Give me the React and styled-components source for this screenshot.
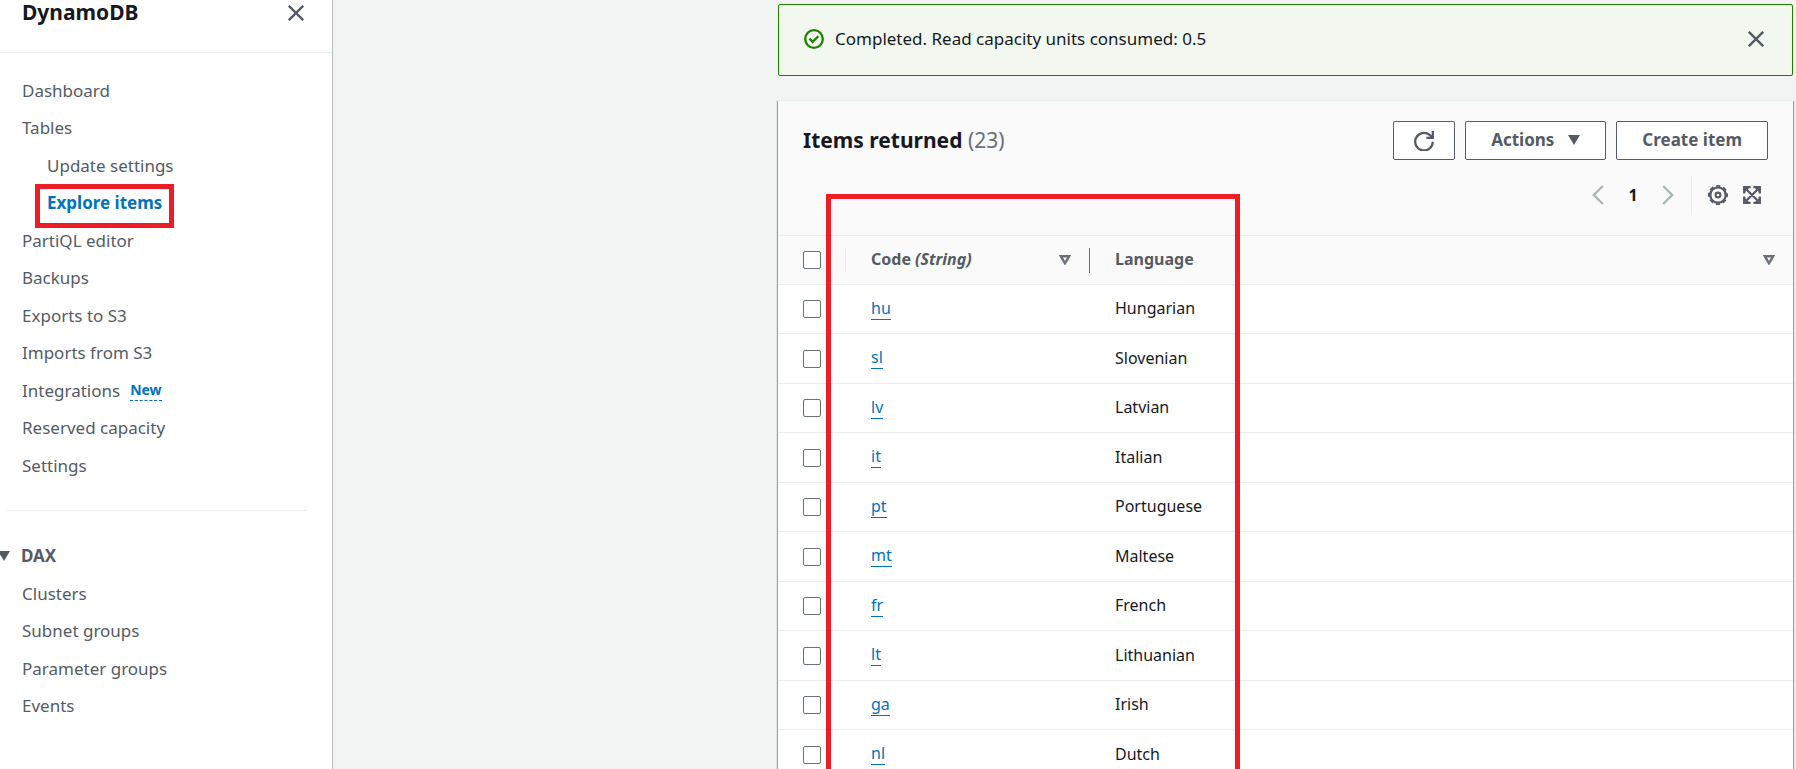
import React from "react";
import styled, { createGlobalStyle, css } from "styled-components";

const GlobalStyle = createGlobalStyle`
  *, *::before, *::after { box-sizing: border-box; }
  body {
    margin: 0;
    background: #f2f3f3;
    color: #16191f;
    font: 17px/22px "Noto Sans", "Open Sans", sans-serif;
  }
  button { font: inherit; color: inherit; }
`;

const Shell = styled.div`
  display: flex;
  height: 100vh;
  overflow: hidden;
`;

const Sidebar = styled.aside`
  flex: 0 0 333px;
  background: #fff;
  border-right: 1px solid #b6bfc0;
  color: #545b64;
  overflow: hidden;
`;

const SidebarHeader = styled.header`
  display: flex;
  justify-content: space-between;
  align-items: flex-start;
  height: 53px;
  padding: 0 28px 0 22px;
  border-bottom: 1px solid #eaeded;
`;

const Brand = styled.a`
  color: #16191f;
  font-size: 21px;
  font-weight: 700;
  line-height: 24px;
  text-decoration: none;
`;

const IconButton = styled.button`
  display: inline-flex;
  align-items: center;
  justify-content: center;
  width: ${(p) => p.$width || 16}px;
  height: 26px;
  padding: 0;
  border: 0;
  background: none;
  color: ${(p) => (p.$muted ? "#aab7b8" : "#545b64")};
  cursor: pointer;
`;

const NavList = styled.ul`
  list-style: none;
  margin: 0;
  padding: ${(p) => (p.$first ? "19px" : "0")} 0 0 22px;
`;

const NavItem = styled.li`
  display: flex;
  align-items: center;
  gap: 10px;
  height: 37px;
  padding-left: ${(p) => (p.$nested ? 25 : 0)}px;
  &:nth-child(even) { height: 38px; }
`;

const NavLink = styled.a`
  position: relative;
  color: ${(p) => (p.$active ? "#0073bb" : "#545b64")};
  font-weight: ${(p) => (p.$active ? 700 : 400)};
  text-decoration: none;
`;

const highlight = css`
  position: absolute;
  border: 5px solid #ee1c25;
  pointer-events: none;
`;

const LinkHighlight = styled.span`
  ${highlight}
  inset: -8px -12px -14px -12px;
`;

const NewBadge = styled.button`
  padding: 0;
  border: 0;
  border-bottom: 1px dashed #0073bb;
  background: none;
  color: #0073bb;
  font-size: 14px;
  font-weight: 700;
  line-height: 20px;
  cursor: pointer;
`;

const Divider = styled.hr`
  height: 1px;
  margin: 26px 25px 25px 7px;
  border: 0;
  background: #eaeded;
`;

const SectionToggle = styled.button`
  display: flex;
  align-items: center;
  gap: 11px;
  height: 39px;
  padding: 0;
  border: 0;
  background: none;
  font-weight: 700;
  cursor: pointer;
`;

const Main = styled.main`
  flex: 1;
  min-width: 0;
  padding: 4px 3px 0 445px;
`;

const Alert = styled.section`
  display: flex;
  align-items: center;
  gap: 11px;
  height: 72px;
  padding: 0 28px 2px 25px;
  border: 1px solid #1d8102;
  border-radius: 2px;
  background: #f2f8f0;
`;

const AlertText = styled.p`
  flex: 1;
  margin: 0;
`;

const Card = styled.section`
  position: relative;
  margin-top: 24px;
  border-top: 1px solid #eaeded;
  background: #fff;
  box-shadow: 0 1px 1px 0 rgba(0, 28, 36, 0.3), 1px 1px 1px 0 rgba(0, 28, 36, 0.35),
    -1px 1px 1px 0 rgba(0, 28, 36, 0.35);
`;

const CardHeader = styled.header`
  display: flex;
  flex-direction: column;
  gap: 15px;
  padding: 20px 25px;
  background: #fafafa;
  border-bottom: 1px solid #eaeded;
`;

const TitleRow = styled.div`
  display: flex;
  justify-content: space-between;
  align-items: center;
`;

const Title = styled.h2`
  margin: 0;
  padding-bottom: 2px;
  font-size: 21px;
  font-weight: 700;
  line-height: 26px;
`;

const Count = styled.span`
  color: #687078;
  font-weight: 400;
`;

const ButtonGroup = styled.div`
  display: flex;
  gap: 10px;
`;

const Button = styled.button`
  display: inline-flex;
  align-items: center;
  justify-content: center;
  gap: 14px;
  height: 39px;
  padding: 0 ${(p) => (p.$icon ? 20 : 25)}px ${(p) => (p.$icon ? 0 : 2)}px;
  border: 1px solid #545b64;
  border-radius: 2px;
  background: #fff;
  color: #545b64;
  font-weight: 700;
  cursor: pointer;
`;

const Tools = styled.div`
  display: flex;
  justify-content: flex-end;
  align-items: center;
  height: 40px;
  padding-right: 7px;
`;

const Pager = styled.nav`
  display: flex;
  align-items: center;
  gap: 24px;
  height: 39px;
  padding-right: 17px;
  margin-right: 16px;
  border-right: 1px solid #eaeded;
`;

const PageButton = styled.button`
  width: 10px;
  padding: 0;
  border: 0;
  background: none;
  color: #16191f;
  font-size: 16px;
  font-weight: 700;
  cursor: pointer;
`;

const Preferences = styled.div`
  display: flex;
  gap: 15px;
`;

const Table = styled.table`
  width: 100%;
  border-collapse: separate;
  border-spacing: 0;
  table-layout: fixed;
  font-size: 16px;
`;

const Row = styled.tr`
  height: 49px;
  &:nth-child(even) { height: 50px; }
`;

const HeadCell = styled.th`
  width: ${(p) => p.$width || "auto"};
  height: 49px;
  padding: 0;
  border-bottom: 1px solid #eaeded;
  background: #fafafa;
  color: #545b64;
  text-align: left;
`;

const HeadContent = styled.div`
  display: flex;
  align-items: center;
  justify-content: space-between;
  height: 25px;
  padding: 0 18px 0 25px;
  border-right: ${(p) => (p.$divider ? `1px solid ${p.$divider}` : "0")};
`;

const HeadLabel = styled.span`
  padding-bottom: 2px;
`;

const Cell = styled.td`
  padding: 0 25px 2px;
  border-bottom: 1px solid #eaeded;
`;

const CheckCell = styled(Cell)`
  padding-bottom: 0;
`;

const Checkbox = styled.input.attrs({ type: "checkbox" })`
  appearance: none;
  display: block;
  width: 18px;
  height: 18px;
  margin: 0;
  border: 1px solid #687078;
  border-radius: 2px;
  background: #fff;
  &:checked { background: #0073bb; }
`;

const ItemLink = styled.a`
  display: inline-block;
  border-bottom: 1px solid #0073bb;
  color: #0073bb;
  line-height: 21px;
  text-decoration: none;
`;

const TableHighlight = styled.div`
  ${highlight}
  top: 93px;
  bottom: -20px;
  left: 48px;
  width: 414px;
`;

const CloseIcon = () => (
  <svg width="16" height="16" viewBox="0 0 16 16" fill="none" stroke="currentColor" strokeWidth="2.4" aria-hidden="true">
    <path d="M.8.8l14.4 14.4M15.2.8L.8 15.2" />
  </svg>
);

const SuccessIcon = () => (
  <svg width="20" height="20" viewBox="0 0 20 20" fill="none" stroke="#1d8102" strokeWidth="2.3" aria-hidden="true">
    <circle cx="10" cy="10" r="8.8" />
    <path d="M5.5 9.6l3.2 3.2 5.6-5.6" />
  </svg>
);

const RefreshIcon = () => (
  <svg width="20" height="20" viewBox="0 0 20 20" fill="none" stroke="currentColor" strokeWidth="2.3" aria-hidden="true">
    <path d="M18.8 10.8A8.8 8.8 0 1 1 15.6 3.9L18 6.2" />
    <path d="M18.8 0v6.9H12.4" />
  </svg>
);

const CaretIcon = () => (
  <svg width="12" height="10" viewBox="0 0 12 10" fill="currentColor" aria-hidden="true">
    <path d="M0 0h12L6 10z" />
  </svg>
);

const SectionCaret = () => (
  <svg width="10" height="10" viewBox="0 0 10 10" fill="#545b64" aria-hidden="true">
    <path d="M-2 0h12L4 10z" />
  </svg>
);

const SortIcon = () => (
  <svg width="12" height="10" viewBox="0 0 12 10" fill="none" stroke="#687078" strokeWidth="2.4" aria-hidden="true">
    <path d="M1.8 1.2h8.4L6 8.3z" />
  </svg>
);

const ChevronIcon = ({ right }) => (
  <svg width="12" height="20" viewBox="0 0 12 20" fill="none" stroke="currentColor" strokeWidth="2.4" aria-hidden="true">
    <path d={right ? "M1.2 1l9 9-9 9" : "M10.8 1l-9 9 9 9"} />
  </svg>
);

const GearIcon = () => (
  <svg width="20" height="20" viewBox="0 0 20 20" fill="none" stroke="currentColor" aria-hidden="true">
    <circle cx="10" cy="10" r="7.7" strokeWidth="2.3" />
    <circle cx="10" cy="10" r="9.1" strokeWidth="1.8" strokeDasharray="4.2 2.947" strokeDashoffset="2.1" />
    <circle cx="10" cy="10" r="2.4" strokeWidth="2.1" />
  </svg>
);

const ExpandIcon = () => (
  <svg width="18" height="18" viewBox="0 0 18 18" fill="none" stroke="currentColor" strokeWidth="2.3" aria-hidden="true">
    <path d="M1.2 7.6V1.2H7.6M10.4 1.2h6.4V7.6M16.8 10.4v6.4H10.4M7.6 16.8H1.2V10.4M1.5 1.5l15 15M16.5 1.5l-15 15" />
    <path
      fill="currentColor"
      stroke="none"
      d="M1 1h6L1 7zM17 1v6L11 1zM17 17h-6L17 11zM1 17V11L7 17z"
    />
  </svg>
);

const mainLinks = [
  { label: "Dashboard" },
  { label: "Tables" },
  { label: "Update settings", nested: true },
  { label: "Explore items", nested: true, active: true },
  { label: "PartiQL editor" },
  { label: "Backups" },
  { label: "Exports to S3" },
  { label: "Imports from S3" },
  { label: "Integrations", isNew: true },
  { label: "Reserved capacity" },
  { label: "Settings" },
];

const daxLinks = [
  { label: "Clusters" },
  { label: "Subnet groups" },
  { label: "Parameter groups" },
  { label: "Events" },
];

const items = [
  ["hu", "Hungarian"],
  ["sl", "Slovenian"],
  ["lv", "Latvian"],
  ["it", "Italian"],
  ["pt", "Portuguese"],
  ["mt", "Maltese"],
  ["fr", "French"],
  ["lt", "Lithuanian"],
  ["ga", "Irish"],
  ["nl", "Dutch"],
];

const Nav = ({ links, first }) => (
  <NavList $first={first}>
    {links.map((link) => (
      <NavItem key={link.label} $nested={link.nested}>
        <NavLink href="#" $active={link.active} aria-current={link.active ? "page" : undefined}>
          {link.label}
          {link.active && <LinkHighlight />}
        </NavLink>
        {link.isNew && <NewBadge type="button">New</NewBadge>}
      </NavItem>
    ))}
  </NavList>
);

export default function App() {
  return (
    <>
      <GlobalStyle />
      <Shell>
        <Sidebar>
          <SidebarHeader>
            <Brand href="#">DynamoDB</Brand>
            <IconButton type="button" aria-label="Close navigation">
              <CloseIcon />
            </IconButton>
          </SidebarHeader>
          <nav aria-label="DynamoDB">
            <Nav links={mainLinks} first />
            <Divider />
            <SectionToggle type="button" aria-expanded="true">
              <SectionCaret />
              DAX
            </SectionToggle>
            <Nav links={daxLinks} />
          </nav>
        </Sidebar>
        <Main>
          <Alert role="status">
            <SuccessIcon />
            <AlertText>Completed. Read capacity units consumed: 0.5</AlertText>
            <IconButton type="button" aria-label="Dismiss">
              <CloseIcon />
            </IconButton>
          </Alert>
          <Card>
            <CardHeader>
              <TitleRow>
                <Title>
                  Items returned <Count>(23)</Count>
                </Title>
                <ButtonGroup>
                  <Button type="button" $icon aria-label="Refresh">
                    <RefreshIcon />
                  </Button>
                  <Button type="button">
                    Actions
                    <CaretIcon />
                  </Button>
                  <Button type="button">Create item</Button>
                </ButtonGroup>
              </TitleRow>
              <Tools>
                <Pager aria-label="Pagination">
                  <IconButton type="button" $width={12} $muted aria-label="Previous page">
                    <ChevronIcon />
                  </IconButton>
                  <PageButton type="button">1</PageButton>
                  <IconButton type="button" $width={12} $muted aria-label="Next page">
                    <ChevronIcon right />
                  </IconButton>
                </Pager>
                <Preferences>
                  <IconButton type="button" $width={20} aria-label="Preferences">
                    <GearIcon />
                  </IconButton>
                  <IconButton type="button" $width={18} aria-label="Full screen">
                    <ExpandIcon />
                  </IconButton>
                </Preferences>
              </Tools>
            </CardHeader>
            <Table>
              <thead>
                <tr>
                  <HeadCell $width="68px">
                    <HeadContent $divider="#eaeded">
                      <Checkbox aria-label="Select all items" />
                    </HeadContent>
                  </HeadCell>
                  <HeadCell $width="244px">
                    <HeadContent $divider="#687078">
                      <HeadLabel>
                        Code <em>(String)</em>
                      </HeadLabel>
                      <SortIcon />
                    </HeadContent>
                  </HeadCell>
                  <HeadCell>
                    <HeadContent>
                      <HeadLabel>Language</HeadLabel>
                      <SortIcon />
                    </HeadContent>
                  </HeadCell>
                </tr>
              </thead>
              <tbody>
                {items.map(([code, language]) => (
                  <Row key={code}>
                    <CheckCell>
                      <Checkbox aria-label={`Select ${code}`} />
                    </CheckCell>
                    <Cell>
                      <ItemLink href="#">{code}</ItemLink>
                    </Cell>
                    <Cell>{language}</Cell>
                  </Row>
                ))}
              </tbody>
            </Table>
            <TableHighlight />
          </Card>
        </Main>
      </Shell>
    </>
  );
}
